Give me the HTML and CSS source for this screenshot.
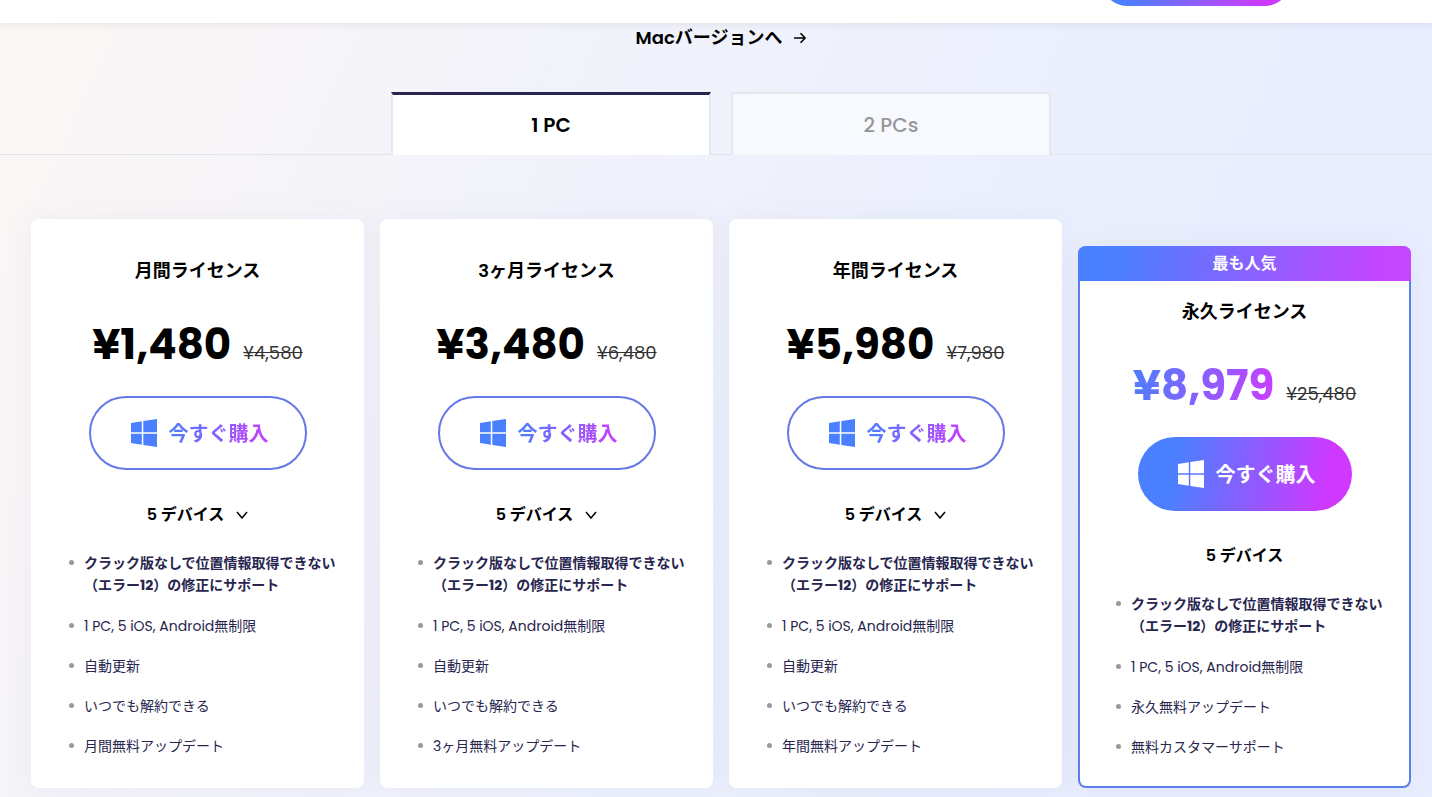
FILE: index.html
```html
<!DOCTYPE html>
<html lang="ja">
<head>
    <meta charset="UTF-8">
    <meta name="viewport" content="width=device-width, initial-scale=1.0">
    <title>ライセンス購入</title>
    <link rel="stylesheet" href="styles.css">
</head>
<body>

    <svg width="0" height="0" class="sprite" aria-hidden="true">
        <symbol id="win" viewBox="0 0 26 28">
            <path d="M0 4 10.8 2.3V13.2H0zM12.3 2.1 26 0V13.2H12.3zM0 14.8H10.8V25.7L0 24zM12.3 14.8H26V28L12.3 25.9z"/>
        </symbol>
        <symbol id="down" viewBox="0 0 12 8">
            <path d="M1 1 6 7 11 1" fill="none" stroke="currentColor" stroke-width="1.5"/>
        </symbol>
    </svg>

    <header class="header">
        <button class="header-btn" aria-label="buy"></button>
    </header>

    <main>
        <div class="switch">
            <a href="#mac">Macバージョンへ
                <svg width="12" height="12" viewBox="0 0 12 12"><path d="M0 6H11M6.5 1.2 11.2 6 6.5 10.8" fill="none" stroke="currentColor" stroke-width="1.6"/></svg>
            </a>
        </div>

        <div class="tabs">
            <button class="tab active">1 PC</button>
            <button class="tab">2 PCs</button>
        </div>

        <section class="plans">
            <div class="card">
                <h3>月間ライセンス</h3>
                <div class="price"><strong>¥1,480</strong><del>¥4,580</del></div>
                <a class="buy" href="#buy"><svg width="26" height="28"><use href="#win"/></svg><span>今すぐ購入</span></a>
                <button class="devices">5 デバイス <svg width="12" height="8"><use href="#down"/></svg></button>
                <ul>
                    <li><b>クラック版なしで位置情報取得できない（エラー12）の修正にサポート</b></li>
                    <li>1 PC, 5 iOS, Android無制限</li>
                    <li>自動更新</li>
                    <li>いつでも解約できる</li>
                    <li>月間無料アップデート</li>
                </ul>
            </div>

            <div class="card">
                <h3>3ヶ月ライセンス</h3>
                <div class="price"><strong>¥3,480</strong><del>¥6,480</del></div>
                <a class="buy" href="#buy"><svg width="26" height="28"><use href="#win"/></svg><span>今すぐ購入</span></a>
                <button class="devices">5 デバイス <svg width="12" height="8"><use href="#down"/></svg></button>
                <ul>
                    <li><b>クラック版なしで位置情報取得できない（エラー12）の修正にサポート</b></li>
                    <li>1 PC, 5 iOS, Android無制限</li>
                    <li>自動更新</li>
                    <li>いつでも解約できる</li>
                    <li>3ヶ月無料アップデート</li>
                </ul>
            </div>

            <div class="card">
                <h3>年間ライセンス</h3>
                <div class="price"><strong>¥5,980</strong><del>¥7,980</del></div>
                <a class="buy" href="#buy"><svg width="26" height="28"><use href="#win"/></svg><span>今すぐ購入</span></a>
                <button class="devices">5 デバイス <svg width="12" height="8"><use href="#down"/></svg></button>
                <ul>
                    <li><b>クラック版なしで位置情報取得できない（エラー12）の修正にサポート</b></li>
                    <li>1 PC, 5 iOS, Android無制限</li>
                    <li>自動更新</li>
                    <li>いつでも解約できる</li>
                    <li>年間無料アップデート</li>
                </ul>
            </div>

            <div class="card popular">
                <div class="ribbon">最も人気</div>
                <h3>永久ライセンス</h3>
                <div class="price"><strong>¥8,979</strong><del>¥25,480</del></div>
                <a class="buy" href="#buy"><svg width="26" height="28"><use href="#win"/></svg><span>今すぐ購入</span></a>
                <div class="devices">5 デバイス</div>
                <ul>
                    <li><b>クラック版なしで位置情報取得できない（エラー12）の修正にサポート</b></li>
                    <li>1 PC, 5 iOS, Android無制限</li>
                    <li>永久無料アップデート</li>
                    <li>無料カスタマーサポート</li>
                </ul>
            </div>
        </section>
    </main>

</body>
</html>
```

FILE: styles.css
```css
* {
    box-sizing: border-box;
}

body {
    margin: 0;
    font-family: Poppins, Inter, "Noto Sans CJK JP", sans-serif;
    color: #000;
    background: #e8eeff;
}

button {
    font-family: inherit;
    cursor: pointer;
}

a {
    color: inherit;
    text-decoration: none;
}

.sprite {
    position: absolute;
}

/* header */
.header {
    position: relative;
    z-index: 2;
    display: flex;
    justify-content: flex-end;
    align-items: flex-end;
    height: 23px;
    padding: 0 142px 17px 0;
    background: #fff;
    box-shadow: 0 0 10px rgba(0, 0, 0, 0.1);
    clip-path: inset(0 0 -12px 0);
}

.header-btn {
    flex: none;
    width: 188px;
    height: 50px;
    border: none;
    border-radius: 25px;
    background: linear-gradient(100deg, #4a80ff 15%, #d038ff 88%);
}

main {
    padding-bottom: 9px;
    background: linear-gradient(115deg, #fcf7f5 0%, #f1f2fb 36%, #e8eefe 75%);
}

.switch {
    display: flex;
    justify-content: center;
    padding: 1px 21px 0 31px;
}

.switch a {
    display: flex;
    align-items: center;
    gap: 12px;
    font-size: 18px;
    line-height: 28px;
    font-weight: 600;
}

/* tabs */
.tabs {
    display: flex;
    justify-content: center;
    gap: 20px;
    margin-top: 40px;
    padding: 0 21px 0 31px;
    box-shadow: inset 0 -1px #e2e3ee;
}

.tab {
    width: 320px;
    height: 63px;
    padding: 0;
    border: 2px solid #e5e6ef;
    border-bottom: none;
    background: #f8f9fe;
    font-size: 20px;
    font-weight: 500;
    color: #96979b;
}

.tab.active {
    border-top: 3px solid #28264f;
    background: #fff;
    font-weight: 600;
    color: #000;
}

/* plans */
.plans {
    display: grid;
    grid-template-columns: repeat(4, 1fr);
    align-items: end;
    gap: 16px;
    padding: 64px 21px 0 31px;
}

.card {
    display: flex;
    flex-direction: column;
    align-items: center;
    padding: 38px 0 31px;
    border-radius: 8px;
    background: #fff;
    box-shadow: 0 0 30px rgba(80, 80, 130, 0.06);
}

.card h3 {
    margin: 0;
    font-size: 18px;
    line-height: 28px;
    font-weight: 600;
}

.price {
    display: flex;
    align-items: baseline;
    gap: 12px;
    height: 64px;
    margin-top: 28px;
    line-height: 64px;
}

.price strong {
    font-size: 42px;
    font-weight: 700;
}

.price del {
    font-size: 18px;
    font-weight: 400;
    color: #333;
}

.buy {
    display: flex;
    align-items: center;
    gap: 12px;
    height: 74px;
    margin-top: 19px;
    padding: 0 36px 0 40px;
    border: 2px solid #6478e8;
    border-radius: 37px;
    font-size: 20px;
    font-weight: 700;
}

.buy svg {
    fill: #4a80ff;
}

.buy span,
.popular strong {
    background: linear-gradient(100deg, #4a80ff, #cc3cff);
    -webkit-background-clip: text;
    background-clip: text;
    color: transparent;
}

.devices {
    display: flex;
    align-items: center;
    gap: 12px;
    margin-top: 33px;
    padding: 0;
    border: none;
    background: none;
    font-size: 16px;
    line-height: 24px;
    font-weight: 600;
    color: #000;
}

.card ul {
    align-self: stretch;
    margin: 25px 0 0;
    padding: 0 20px 0 38px;
    list-style: none;
}

.card li {
    display: flex;
    gap: 10px;
    margin-bottom: 18px;
    font-size: 14px;
    line-height: 22px;
    color: #28264f;
}

.card li:first-child {
    margin-bottom: 19px;
}

.card li:last-child {
    margin-bottom: 0;
}

.card li::before {
    content: "";
    flex: none;
    width: 5px;
    height: 5px;
    margin-top: 8px;
    border-radius: 50%;
    background: #999;
}

/* most popular plan */
.popular {
    padding: 0 0 28px;
    border: 2px solid #5a80e6;
    border-top: none;
}

.popular .ribbon {
    align-self: stretch;
    margin: 0 -2px 17px;
    border-radius: 8px 8px 0 0;
    background: linear-gradient(100deg, #4a80ff 12%, #c446ff 90%);
    font-size: 16px;
    line-height: 35px;
    font-weight: 600;
    text-align: center;
    color: #fff;
}

.popular .buy {
    border: none;
    background: linear-gradient(100deg, #4a80ff 18%, #d038ff 88%);
}

.popular .buy svg {
    fill: #fff;
}

.popular .buy span {
    background: none;
    color: #fff;
}

.popular ul {
    padding: 0 18px 0 36px;
}
```
